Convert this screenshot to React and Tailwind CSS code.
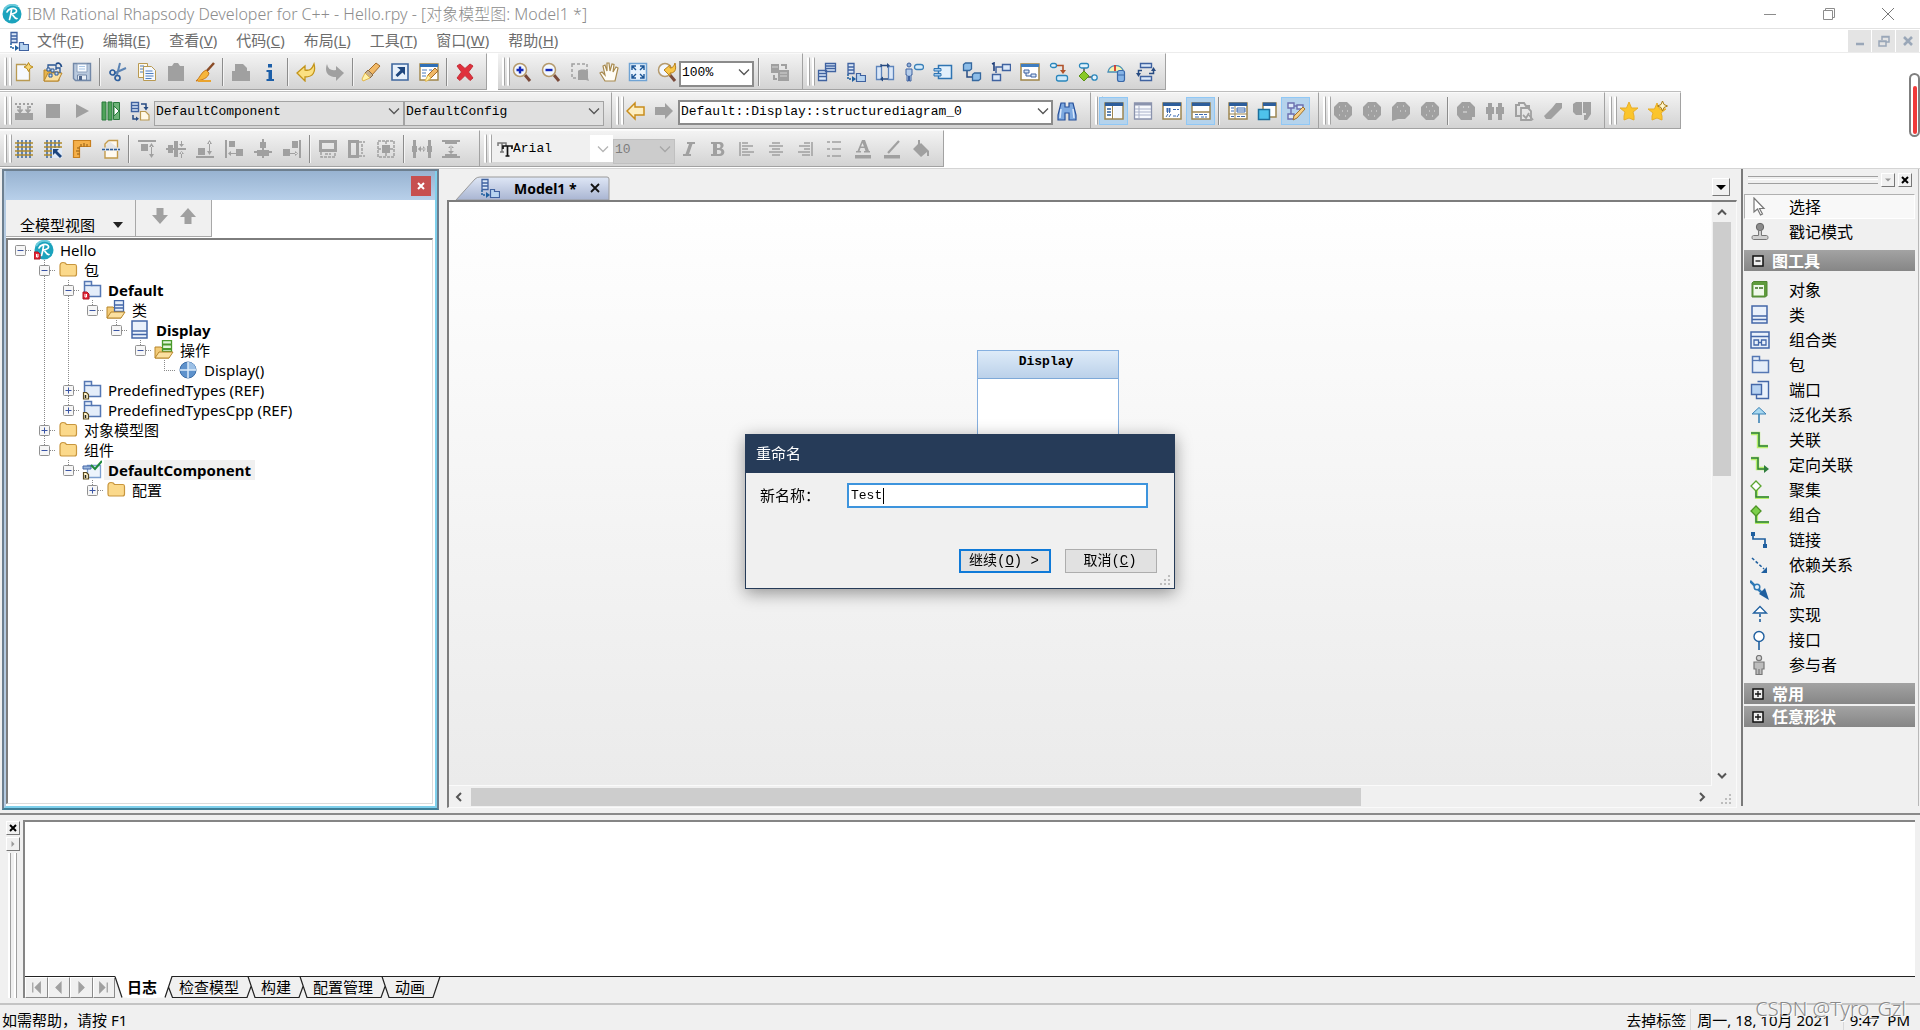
// src/App.jsx
import React, { useState } from 'react';

const UI = "font-['Noto_Sans','Noto_Sans_CJK_SC',sans-serif]";
const MONO = "font-['Liberation_Mono','Noto_Sans_CJK_SC',monospace]";

const G = '#a0a0a0';
const B = '#3f62a0';
const LB = '#dbe8f8';

/* --- ICONS (20 x 20 grid) --- */
const ICONS = {
  rhapsody: (
    <>
      <circle cx="10" cy="10" r="9.5" fill="#1ba3bd" />
      <path d="M2 6a9.500 9.500 0 0 1 14-3.500" stroke="#6ccbdc" strokeWidth="2" fill="none" />
      <path d="M7.500 15.500c1-3 1.500-6 2-9.500M5 8c1-3 7-5 9-2.500s-2 4.500-4.500 4.500c2 .5 2.500 5 5.500 4.500" stroke="#fff" strokeWidth="1.700" fill="none" strokeLinecap="round" />
    </>
  ),
  rhapsodyD: (
    <>
      <circle cx="10" cy="10" r="9.5" fill="#1ba3bd" />
      <path d="M2 6a9.500 9.500 0 0 1 14-3.500" stroke="#6ccbdc" strokeWidth="2" fill="none" />
      <path d="M7.500 15.500c1-3 1.500-6 2-9.500M5 8c1-3 7-5 9-2.500s-2 4.500-4.500 4.500c2 .5 2.500 5 5.500 4.500" stroke="#fff" strokeWidth="1.700" fill="none" strokeLinecap="round" />
      <path d="M0 12h4l2 2v5H0z" fill="#e32636" stroke="#b01522" />
      <path d="M2.500 14v3H4v-3" fill="none" stroke="#fff" />
    </>
  ),
  diagram: (
    <>
      <path d="M2 1.500h6v10h-6zM2 5h6M2 8h6" fill={LB} stroke={B} strokeWidth="1.300" />
      <path d="M2 12v5h5" fill="none" stroke="#1f5f9f" strokeWidth="1.500" strokeDasharray="2 1" />
      <path d="M6 14l4 3-4 3z" fill="#1f5f9f" />
      <path d="M10.500 11.500h4v2h5v6h-9z" fill="#b8d4f0" stroke={B} strokeWidth="1.200" />
    </>
  ),
  newFile: (
    <>
      <path d="M2.500 2.500h9l4 4v12h-13z" fill="#f6f9ff" stroke="#b99a52" strokeWidth="1.300" />
      <path d="M14.500.5l1.500 3 3 1.500-3 1.500-1.500 3-1.500-3-3-1.500 3-1.500z" fill="#f8d775" stroke="#b98a1c" />
    </>
  ),
  openModel: (
    <>
      <path d="M1 8h6l2 2h7v9h-15z" fill="#e7b44d" stroke="#b8862b" />
      <path d="M1 19l4-8h14l-4 8z" fill="#fbe0a0" stroke="#b8862b" />
      <path d="M5 7V3h4M9 3h4v5M13 6h4v5" fill="none" stroke="#2a5794" strokeWidth="1.300" />
      <path d="M4 6h3v3H4zM8 7h3v3H8zM12 10h3v3h-3zM6 12h3v3H6z" fill="#cfe2f7" stroke="#2a5794" />
      <path d="M13 2c3-2 5 0 5.500 3" fill="none" stroke="#1f4a86" strokeWidth="1.800" />
    </>
  ),
  save: (
    <>
      <path d="M1.500 1.500h17v17h-15l-2-2z" fill="#b9c9dd" stroke="#7288a8" strokeWidth="1.400" />
      <path d="M5 2h10v8H5z" fill="#f7fbff" stroke="#8ea2bd" />
      <path d="M7 4.500h6M7 7h6" stroke="#a9c6e6" />
      <path d="M5.500 13h9v5h-9z" fill="#e9eff6" stroke="#7288a8" />
      <path d="M7 14h3v4H7z" fill="#4c648a" />
    </>
  ),
  cut: (
    <>
      <path d="M12 1L9 13M18 6L7 11" stroke="#5c84b4" strokeWidth="2" />
      <circle cx="4.500" cy="10.500" r="2.500" fill="none" stroke="#2e5f9e" strokeWidth="1.700" />
      <circle cx="9.500" cy="16" r="2.500" fill="none" stroke="#2e5f9e" strokeWidth="1.700" />
    </>
  ),
  copy: (
    <>
      <path d="M1.500 1.500h9v14h-9z" fill="#fff9ea" stroke="#b99a52" />
      <path d="M6.500 4.500h8l4 4v10h-12z" fill="#f3f8ff" stroke="#b99a52" />
      <path d="M3 4h4M3 7h3M3 10h3M8.500 9h7M8.500 11.500h8M8.500 14h8M8.500 16.500h6" stroke="#4f7fc0" />
    </>
  ),
  paste: <path d="M2 4h4l2-3h4l2 3h4v15H2z" fill={G} />,
  brush: (
    <>
      <path d="M19 1l-9 10" stroke="#8a4b26" strokeWidth="2.500" />
      <path d="M11 8l3 3c-1 5-6 7-13 8 4-3 5-9 10-11z" fill="#f6b53a" stroke="#c8791a" />
      <path d="M3 19h13" stroke="#e9a32e" strokeWidth="2" />
    </>
  ),
  print: <path d="M4 2h8l4 4v3h3v10H1V9h3z" fill={G} />,
  info: <path d="M8 2h4v3.500H8zM6.500 8h5.500v9h2v2H6.500v-2h2v-7h-2z" fill="#1d5fa8" />,
  undo: <path d="M1 11L9 4v4c5 1 7-1 9-6 2 8-1 13-9 13v4z" fill="#fbe081" stroke="#c39419" strokeWidth="1.300" />,
  redo: <path d="M19 11L11 4v4C6 9 3 7 2 2c-3 8 1 13 9 13v4z" fill={G} />,
  torch: (
    <>
      <path d="M15 1l4 3-8 9-4-4z" fill="#f1b967" stroke="#a36b2a" />
      <path d="M7 8l5 5-3 3-5-5z" fill="#c9b08a" stroke="#8a6a44" />
      <path d="M4 11l5 5-7 3-1-2z" fill="#fff2a8" stroke="#e2b64a" />
    </>
  ),
  goto: (
    <>
      <path d="M2 2h16v16H2z" fill="#e7f0fa" stroke="#3f679e" strokeWidth="1.600" />
      <path d="M7 5h8v8l-2.500-2.500-5 4.500-2-2 5-5z" fill="#1f477e" />
    </>
  ),
  windowTorch: (
    <>
      <path d="M1 2h18v16H1z" fill="#fff" stroke="#a08548" strokeWidth="1.400" />
      <path d="M1 2h18v3H1z" fill="#2f6fb6" />
      <path d="M3 8h5M3 11h4M10 8h3M3 14h4" stroke="#4a7bbb" />
      <path d="M16 6l3 3-8 8-3-3z" fill="#f1b967" stroke="#a36b2a" />
      <path d="M9 13l3 3-4 3H6z" fill="#fff2a8" stroke="#e2b64a" />
    </>
  ),
  del: <path d="M2 4l3-2 5 4.500L15 2l3 2-4.500 6 4.500 6-3 2.500-5-5-5 5L2 16l4.500-6z" fill="#e0303c" stroke="#c2303a" />,
  zoomIn: (
    <>
      <path d="M13 13l5 6" stroke="#7a4a3a" strokeWidth="3" />
      <circle cx="8" cy="8" r="6.500" fill="#f3f8ff" stroke="#b59a6c" strokeWidth="1.500" />
      <path d="M4.500 8h7M8 4.500v7" stroke="#1226b8" strokeWidth="2.400" />
    </>
  ),
  zoomOut: (
    <>
      <path d="M13 13l5 6" stroke="#7a4a3a" strokeWidth="3" />
      <circle cx="8" cy="8" r="6.500" fill="#f3f8ff" stroke="#b59a6c" strokeWidth="1.500" />
      <path d="M4.500 8h7" stroke="#1226b8" strokeWidth="2.400" />
    </>
  ),
  zoomArea: (
    <>
      <path d="M2 2h15v14H2z" fill="none" stroke={G} strokeWidth="1.500" strokeDasharray="3 2" />
      <path d="M8 9c1-2 8-2 10 0v7l1 3-3-1H8z" fill={G} />
    </>
  ),
  hand: <path d="M6 19L1 11l2-1 3 3L4 4l2-1 2 6V1h2l1 8 2-7 2 .5L14 10l3-5 2 1-3 13z" fill="#fffdf6" stroke="#a88a4e" strokeWidth="1.200" />,
  fit: (
    <>
      <path d="M1.500 1.500h17v17h-17z" fill="#e8f3fd" stroke="#6fa3d4" strokeWidth="1.500" />
      <path d="M4 8V4h4M4 4l4 4M12 4h4v4M16 4l-4 4M4 12v4h4M4 16l4-4M16 12v4h-4M16 16l-4-4" fill="none" stroke="#1b5596" strokeWidth="1.400" />
    </>
  ),
  zoomUndo: (
    <>
      <path d="M13 13l5 6" stroke="#7a4a3a" strokeWidth="3" />
      <circle cx="8" cy="8" r="6.500" fill="#f3f8ff" stroke="#b59a6c" strokeWidth="1.500" />
      <path d="M7 8l6-5v3c3 0 4-2 5-5 2 8-1 10-5 10v3z" fill="#f9c74a" stroke="#b8801c" />
    </>
  ),
  sync: (
    <>
      <path d="M1 2h8v9H1zM8 8h11v11H8z" fill={G} />
      <path d="M11 3h5v4M4 13v4h3" fill="none" stroke={G} strokeWidth="2" />
      <path d="M2 5h6M10 11h7M10 14h7" stroke="#d4d4d4" />
    </>
  ),
  dObject: <path d="M8.500 1.500h10v8h-10zM8.500 4h10M8.500 6.500h10M1.500 8.500h8v10h-8zM1.500 11.500h8M1.500 14.500h8" fill={LB} stroke={B} strokeWidth="1.300" />,
  dSequence: (
    <>
      <path d="M1.500 4.500h5v13h-5zM13.500 4.500h5v13h-5z" fill={LB} stroke="#5d84bb" strokeWidth="1.300" />
      <path d="M6 2v3M6 3.500h7M13 17H7" stroke="#274b82" strokeWidth="1.300" />
      <path d="M12 1l3 2.500L12 6zM8 14.500L5 17l3 2.500z" fill="#274b82" />
    </>
  ),
  dUseCase: (
    <>
      <circle cx="5" cy="3" r="2" fill="#8fb0d8" stroke={B} />
      <path d="M2 7h6v6H7v6H5.500v-5h-1v5H3v-6H2z" fill="#b5cdea" stroke={B} />
      <rect x="10.500" y="2.500" width="9" height="5" rx="2.500" fill="#d9edfb" stroke="#3a80b8" strokeWidth="1.300" />
    </>
  ),
  dComponent: (
    <>
      <path d="M5.500 3.500h13v13h-13z" fill="#e2f0fc" stroke="#2f74b2" strokeWidth="1.500" />
      <path d="M1 6.500h7v2.500H1zM1 11.500h7V14H1z" fill="#9fcaf0" stroke="#2f74b2" />
    </>
  ),
  dDeploy: (
    <>
      <path d="M5 8v7h6" fill="none" stroke="#274b82" strokeWidth="1.500" />
      <path d="M1.500 2.500l2-1.500h6v6l-2 1.500h-6zM10.500 12.500l2-1.500h6v6l-2 1.500h-6z" fill="#8dbde8" stroke="#35689f" strokeWidth="1.300" />
    </>
  ),
  dCollab: (
    <>
      <path d="M5 11V5h7" fill="none" stroke={B} strokeWidth="1.500" />
      <path d="M11.500 2.500h8v6h-8zM1.500 12.500h8v6h-8z" fill={LB} stroke={B} strokeWidth="1.400" />
      <path d="M1 2l2-1v8" fill="none" stroke="#1f3f7a" strokeWidth="1.600" />
    </>
  ),
  dStructure: (
    <>
      <path d="M1 2h18v16H1z" fill="#fff" stroke="#a08548" strokeWidth="1.500" />
      <path d="M1 2h18v3H1z" fill="#3f7dc0" />
      <path d="M4 8h5v3H4zM11 12h5v3h-5zM6 11v3h5" fill={LB} stroke={B} />
    </>
  ),
  dState: (
    <>
      <rect x="1.500" y="1.500" width="6" height="4" rx="2" fill="#e3f3fd" stroke="#2a86bb" strokeWidth="1.300" />
      <path d="M8 3.500h6v6" fill="none" stroke="#b0522a" strokeWidth="1.600" />
      <path d="M11 8l3 4 3-4z" fill="#b0522a" />
      <rect x="7.500" y="13.500" width="11" height="5.500" rx="2" fill="#cfe9fa" stroke="#2a86bb" strokeWidth="1.300" />
    </>
  ),
  dActivity: (
    <>
      <path d="M6 6v6M10 15h5" stroke="#555" strokeWidth="1.500" />
      <rect x="1.500" y="1.500" width="9" height="4.500" rx="2" fill="#e3f3fd" stroke="#2a86bb" strokeWidth="1.300" />
      <path d="M6 9l5 5-5 5-5-5z" fill="#8ac926" stroke="#5a9312" />
      <circle cx="16.500" cy="15.500" r="2.700" fill="#e3f3fd" stroke="#2a86bb" strokeWidth="1.300" />
    </>
  ),
  dPanel: (
    <>
      <path d="M1 10a8 8 0 0 1 15-2l-5 2z" fill="#f5f3b0" stroke="#4a90b8" strokeWidth="1.300" />
      <path d="M8 3v6" stroke="#d8352c" strokeWidth="1.800" />
      <rect x="10.500" y="8.500" width="7" height="11" rx="2" fill="#86b4e6" stroke="#3a68a8" strokeWidth="1.200" />
      <path d="M11 13h6" stroke="#3a68a8" />
    </>
  ),
  dFlow: (
    <>
      <path d="M4.500 1.500h11v4h-11zM4.500 14.500h11v4h-11z" fill={LB} stroke={B} strokeWidth="1.400" />
      <path d="M6 8.500H2.500V12M13 11.500h4.500V8" fill="none" stroke="#274b82" strokeWidth="1.500" />
      <path d="M0 11h5l-2.500 4zM15 9h5l-2.500-4z" fill="#274b82" />
    </>
  ),
  make: (
    <>
      <path d="M1 12h18v7H1z" fill={G} />
      <path d="M1 3h2M5 3h2M9 3h2M13 3h2M17 3h2M3 6h2M15 6h2" stroke={G} strokeWidth="2" />
      <path d="M6 5v6M3.500 8.500L6 11.500l2.500-3M14 5v6M11.500 8.500l2.500 3 2.500-3" fill="none" stroke={G} strokeWidth="1.600" />
    </>
  ),
  stop: <path d="M3 3h14v14H3z" fill={G} />,
  play: <path d="M4 3l13 7-13 7z" fill={G} />,
  animate: (
    <>
      <path d="M1 1h4v18H1zM7 1h4v18H7z" fill="#4fa35a" stroke="#2a7a3c" />
      <path d="M12.500 1.500h6v17h-6z" fill="#6db377" stroke="#2a7a3c" />
      <path d="M13 5l5 5-5 5z" fill="#fff" stroke="#2a7a3c" />
    </>
  ),
  generate: (
    <>
      <path d="M1.500 1.500h7v9h-7zM1.500 4.500h7M1.500 7.500h7" fill={LB} stroke={B} strokeWidth="1.400" />
      <path d="M11 3h5v4M3 14v4h4" fill="none" stroke="#274b82" strokeWidth="1.500" />
      <path d="M13.500 6h5L16 9.500zM6 15.500V20l3-2.200z" fill="#274b82" />
      <path d="M10.500 10.500h5l3.500 3.500v5h-8.500z" fill="#fff9e6" stroke="#b99a52" strokeWidth="1.200" />
    </>
  ),
  back: <path d="M1 10l8-8v4h9v8H9v4z" fill="#fdeec0" stroke="#c98d1c" strokeWidth="1.500" />,
  forward: <path d="M19 10l-8-8v4H1v8h10v4z" fill={G} />,
  binoculars: (
    <>
      <path d="M4 2h4v4h4V2h4l3 12v5h-7v-7H8v7H1v-5z" fill="#7ea9e0" stroke="#27509a" strokeWidth="1.200" />
      <path d="M4 8l-1 9M16 8l1 9" stroke="#d9e8fb" strokeWidth="1.500" />
    </>
  ),
  vBrowser: (
    <>
      <path d="M1 2h18v16H1z" fill="#fff" stroke="#9c8550" strokeWidth="1.500" />
      <path d="M1 1.500h18v3.500H1z" fill="#2c5d9b" />
      <path d="M8.500 5v13" stroke="#9c8550" />
      <path d="M3 8h4M3 11h4M3 14h4" stroke="#2c5d9b" strokeWidth="1.300" />
      <path d="M10 6h8v11h-8z" fill="#f2f7fd" />
    </>
  ),
  vList: (
    <>
      <path d="M1.500 2h17v16h-17z" fill="#f7f9fd" stroke="#8a93ad" strokeWidth="1.300" />
      <path d="M1.500 2h17v2.500h-17z" fill="#8a93ad" />
      <path d="M2 8h16M2 11h16M2 14h16M6 5v12" stroke="#a9b1c9" />
    </>
  ),
  vCode: (
    <>
      <path d="M1 2h18v16H1z" fill="#fff" stroke="#9c8550" strokeWidth="1.500" />
      <path d="M1 1.500h18v3.500H1z" fill="#2c5d9b" />
      <path d="M4 8h5M4 10h5M5.500 7v5M7.500 7v5M11 8.500h3M15 8.500h2M4 16l2-3M7 16l2-3M11 15h3M15 16l2-3" stroke="#3d6bb0" />
    </>
  ),
  vOutput: (
    <>
      <path d="M1 2h18v16H1z" fill="#fff" stroke="#9c8550" strokeWidth="1.500" />
      <path d="M1 1.500h18v3.500H1z" fill="#2c5d9b" />
      <path d="M1 11h18" stroke="#9c8550" strokeWidth="1.500" />
      <path d="M4 13.500h3M8 13.500h4M13 13.500h3M4 16h4M10 16h3M14 16h2" stroke="#3d6bb0" />
    </>
  ),
  vFeatures: (
    <>
      <path d="M1 2h18v16H1z" fill="#fff" stroke="#9c8550" strokeWidth="1.500" />
      <path d="M1 1.500h18v3.500H1z" fill="#2c5d9b" />
      <path d="M7 5v13M1 13h18" stroke="#9c8550" />
      <path d="M3 7h3M3 10h3M9 7h8v4H9zM9 9h8M3 15.500h3M9 15.500h3M13 15.500h4" fill="none" stroke="#3d6bb0" />
    </>
  ),
  vOverview: (
    <>
      <path d="M6 2h13v14H6z" fill="#fff" stroke="#9c8550" strokeWidth="1.500" />
      <path d="M6 1.500h13V5H6z" fill="#2c5d9b" />
      <path d="M1.500 8.500h11v10h-11z" fill="#4ec3ec" stroke="#1d6f9c" strokeWidth="1.500" />
    </>
  ),
  vDraw: (
    <>
      <path d="M2 2h6v5H2zM11 4h6v4h-6zM2 13h6v5H2zM8 5h3M5 7v6" fill={LB} stroke="#6b6fae" strokeWidth="1.400" />
      <path d="M17 6l2 2-8 9-4 2 1-4z" fill="#f6cf86" stroke="#a07330" />
    </>
  ),
  ball: (
    <>
      <path d="M6 1h8l5 5v8l-5 5H6l-5-5V6z" fill={G} />
      <path d="M6 6h1M12 5h1M9 10h1M14 10h1M6 14h1M12 15h1" stroke="#e4e4e4" strokeWidth="1.200" />
    </>
  ),
  bubble: (
    <>
      <path d="M6 1h8l5 5v7l-5 5H7l-6 2V6z" fill={G} />
      <path d="M6 6h1M12 5h1M9 10h1M14 10h1" stroke="#e4e4e4" strokeWidth="1.200" />
    </>
  ),
  head: (
    <>
      <path d="M6 1h8l5 5v10h-3v3H5l-4-5V6z" fill={G} />
      <path d="M7 6h1M12 6h1M7 11h4" stroke="#e4e4e4" strokeWidth="1.200" />
    </>
  ),
  people: <path d="M3 2h4v4h2v7H7v6H3v-6H1V6h2zM13 2h4v4h2v7h-2v6h-4v-6h-2V6h2z" fill={G} />,
  checkDocs: (
    <>
      <path d="M2 4h3V2h5l2 3h3v10H2z" fill="none" stroke={G} strokeWidth="2" />
      <path d="M7 7h7l3 3v9H7z" fill="#e6e6e6" stroke={G} strokeWidth="1.800" />
      <path d="M9 14l3 3 3-5M15 14l4 5" fill="none" stroke={G} strokeWidth="1.800" />
    </>
  ),
  pen: <path d="M13 2h6v5L8 18H3l-2-3 8-8z" fill={G} />,
  thumbs: <path d="M1 3l3-2h6v13H4l-3-3zM11 1h8v12l-4 6h-3v-5h2v-2h-3z" fill={G} />,
  star: <path d="M10 1l2.500 6H19l-5 4 1 4v4l-5-2-5 2v-4l1-4-5-4h6.500z" fill="#fbc52c" stroke="#e8ae2a" />,
  starNew: (
    <>
      <path d="M9 2l2.500 6H18l-5 4 1 3v4l-5-2-5 2v-4l1-3-5-4h6.500z" fill="#fbc52c" stroke="#e8ae2a" />
      <path d="M14.500 0l1.500 3.500L19.500 5 16 6.500 14.500 10 13 6.500 9.500 5 13 3.500z" fill="#fff6cf" stroke="#a97b14" />
    </>
  ),
  grid: (
    <>
      <path d="M4 1v18M8 1v18M12 1v18M16 1v18" stroke="#2b5c9a" strokeWidth="1.400" />
      <path d="M1 4h18M1 8h18M1 12h18M1 16h18" stroke="#b08a2b" strokeWidth="1.400" />
    </>
  ),
  snap: (
    <>
      <path d="M4 1v18M8 1v18M12 1v18M16 1v18" stroke="#2b5c9a" strokeWidth="1.400" />
      <path d="M1 4h18M1 8h18M1 12h18M1 16h18" stroke="#b08a2b" strokeWidth="1.400" />
      <path d="M9 9h10v10H9z" fill="#dfe9f6" />
      <path d="M10 10h6l-2 2 5 5-2 2-5-5-2 2z" fill="#1c457f" />
    </>
  ),
  ruler: (
    <>
      <path d="M1.500 1.500h17v6h-11v11h-6z" fill="#f5b04a" stroke="#c77f1f" strokeWidth="1.200" />
      <path d="M9 5v2.500M12 4v3.500M15 5v2.500M5 9h2.500M4 12h3.500M5 15h2.500" stroke="#8d5a12" />
    </>
  ),
  pageBreak: (
    <>
      <path d="M7.500 1.500h9v7M4 8.500V5l3.500-3.500M4 12v7h12.500v-7" fill="#fffaf0" stroke="#c29a4a" strokeWidth="1.400" />
      <path d="M1 10.500h18" stroke="#2b5c9a" strokeWidth="1.500" strokeDasharray="3 1" />
    </>
  ),
  alTop: <path d="M1 1h18v2H1zM4 5h7v7H4zM12 8h5l-2.500-4zM14 7h1v9h-1zM12 15h5l-2.500 4z" fill={G} />,
  alMid: <path d="M0 9h20v2H0zM2 6h5v8H2zM8 2h4v16H8zM15 2h1v5h-1zM13 5h5l-2.500 3zM15 13h1v6h-1zM13 15h5l-2.500-3z" fill={G} />,
  alBottom: <path d="M1 17h18v2H1zM3 9h7v7H3zM14 3h1v10h-1zM12 5h5l-2.500-4zM12 12h5l-2.500 4z" fill={G} />,
  alLeft: <path d="M1 1h2v18H1zM5 2h6v6H5zM5 14h7v1H5zM7 12v5l-3-2.500zM12 10h7v7h-7z" fill={G} />,
  alCenter: <path d="M9 0h2v19H9zM7 3h6v6H7zM1 12h18v2H1zM4 11h12v6H4z" fill={G} />,
  alRight: <path d="M17 1h2v18h-2zM10 2h6v7h-6zM8 14h7v1H8zM13 12v5l3-2.500zM1 10h7v7H1z" fill={G} />,
  szWidth: (
    <>
      <path d="M2.500 2.500h15v9h-15z" fill="none" stroke={G} strokeWidth="3" />
      <path d="M3 13v5h14v-5M7 15h6" fill="none" stroke={G} strokeWidth="1.500" strokeDasharray="3 1" />
    </>
  ),
  szHeight: (
    <>
      <path d="M2.500 2.500h8v15h-8z" fill="none" stroke={G} strokeWidth="3" />
      <path d="M12 3h6M12 17h6M15 5v10" fill="none" stroke={G} strokeWidth="1.500" strokeDasharray="3 1" />
    </>
  ),
  szBoth: (
    <>
      <path d="M6 6h8v8H6z" fill={G} />
      <path d="M2 2h16v16H2zM10 2v4M10 14v4M2 10h4M14 10h4" fill="none" stroke={G} strokeWidth="1.500" strokeDasharray="3 1" />
    </>
  ),
  spH: <path d="M1 1h3v18H1zM16 1h3v18h-3zM0 7h5v6H0zM15 7h5v6h-5zM6 9.500h8v1H6zM9 7v6l-3-3zM11 7v6l3-3z" fill={G} />,
  spV: <path d="M1 1h18v2h-3v2H4V3H1zM1 19h18v-2h-3v-2H4v2H1zM9.500 6h1v9h-1zM7 9h6l-3-3zM7 12h6l-3 3z" fill={G} />,
  italic: <path d="M8 3h8v2h-2.500L10 15h2v2H4v-2h2.500L10 5H8z" fill={G} />,
  bold: <path fillRule="evenodd" d="M3 3h9c4 0 5 5 1.500 6.500C18 11 17 17 12 17H3v-2h2V5H3zM9 5v4h2c2 0 2-4 0-4zM9 11v4h2c3 0 3-4 0-4z" fill={G} />,
  txLeft: <path d="M3 3v14M5 4h6M5 7h11M5 10h6M5 13h12M5 16h8" stroke={G} strokeWidth="1.500" />,
  txCenter: <path d="M6 4h8M3 7h14M6 10h8M3 13h14M6 16h8" stroke={G} strokeWidth="1.500" />,
  txRight: <path d="M17 3v14M9 4h6M4 7h11M9 10h6M3 13h12M7 16h8" stroke={G} strokeWidth="1.500" />,
  bullets: <path d="M3 3h3M3 10h3M3 17h3M8 3h9M8 10h9M8 17h9" stroke={G} strokeWidth="1.500" />,
  fontColor: <path fillRule="evenodd" d="M2 16h16v3.500H2zM9 1h3l4 11h1v1.500h-6V12h1.500l-1-3H7.500l-1 3H8v1.500H3V12h1.500zM8 7.500h3L9.500 4z" fill={G} />,
  lineColor: (
    <>
      <path d="M2 16h16v3.500H2z" fill={G} />
      <path d="M6 14L17 2" stroke={G} strokeWidth="2.200" />
    </>
  ),
  fill: <path d="M7 1h2v4l1-1 8 8v5h-2v-4l-6 5-8-8 5-5z" fill={G} />,
  folder: <path d="M2 6c0-3 1-3.500 3-3.500s3 .5 3.500 2H17c1.500 0 1.500.5 1.500 2V14c0 1.500-.5 2-2 2h-13c-1 0-1.500-.5-1.500-2z" fill="#fbd98b" stroke="#c8963e" strokeWidth="1.200" />,
  package: (
    <>
      <path d="M2.500 5.500v-4h7v4h9v12h-16z" fill="#e4edf9" stroke="#5577b3" strokeWidth="1.500" />
      <path d="M2.500 5.500h8" stroke="#5577b3" strokeWidth="1.300" />
    </>
  ),
  packageD: (
    <>
      <path d="M2.500 5.500v-4h7v4h9v11h-16z" fill="#e4edf9" stroke="#5577b3" strokeWidth="1.500" />
      <path d="M2.500 5.500h8" stroke="#5577b3" strokeWidth="1.300" />
      <path d="M1 12h4l2 2v5H1z" fill="#e32636" stroke="#b01522" />
      <path d="M3 14v3h1.500v-3" fill="none" stroke="#fff" />
    </>
  ),
  packageRef: (
    <>
      <path d="M2.500 5.500v-4h7v4h9v11h-16z" fill="#e4edf9" stroke="#5577b3" strokeWidth="1.500" />
      <path d="M2.500 5.500h8" stroke="#5577b3" strokeWidth="1.300" />
      <path d="M1.500 12.500h3l2 2v4.500h-5z" fill="#fff4cc" stroke="#5a4a20" strokeWidth="1.200" />
      <path d="M3.500 15v3" stroke="#222" strokeWidth="1.500" />
    </>
  ),
  classFolder: (
    <>
      <path d="M1 7h6l2 2h6v9H1z" fill="#f3cb78" stroke="#b8862b" />
      <path d="M8.500.5h9v11h-9zM8.500 5h9M8.500 8h9" fill="#e6effb" stroke="#4467a8" strokeWidth="1.300" />
      <path d="M1 18l4-6h14l-4 6z" fill="#fbe0a0" stroke="#b8862b" />
    </>
  ),
  opFolder: (
    <>
      <path d="M1 7h6l2 2h6v9H1z" fill="#f3cb78" stroke="#b8862b" />
      <path d="M8.500.5h9v11h-9z" fill="#e3f6dc" stroke="#4a9a2c" strokeWidth="1.300" />
      <path d="M8.500 4.500h9M8 9h10" stroke="#4a9a2c" strokeWidth="2" />
      <path d="M1 18l4-6h14l-4 6z" fill="#fbe0a0" stroke="#b8862b" />
    </>
  ),
  class: (
    <>
      <path d="M2 1h15v17H2z" fill="#eaf1fb" stroke="#4467a8" strokeWidth="1.500" />
      <path d="M2 11h15M2 14.500h15" stroke="#4467a8" strokeWidth="1.300" />
    </>
  ),
  operation: (
    <>
      <circle cx="10" cy="10" r="8" fill="#5e92cc" stroke="#3d6ea8" />
      <path d="M10 2a8 8 0 0 1 8 8h-8z" fill="#9cc0e6" />
      <path d="M10 2v16M2 10h16" stroke="#dcebfa" strokeWidth="1.500" />
    </>
  ),
  component: (
    <>
      <path d="M5.500 5.500h13v12h-13z" fill="#edf4fc" stroke="#7da0cf" strokeWidth="1.300" />
      <path d="M1 6h8v3H1z" fill="#9db9de" stroke="#4467a8" />
      <path d="M9 5l4 4 7-8" fill="none" stroke="#1f8a3c" strokeWidth="2" />
      <path d="M1.500 12.500h3l2 2v4.500h-5z" fill="#fff4cc" stroke="#5a4a20" strokeWidth="1.200" />
      <path d="M3.500 15v3" stroke="#222" strokeWidth="1.500" />
    </>
  ),
  pSelect: <path d="M4 1v14l3.500-3 3 6 2-1-3-5.500H14z" fill="#fff" stroke="#777" strokeWidth="1.200" />,
  pStamp: (
    <>
      <circle cx="10" cy="5" r="3.700" fill="#8b8b8b" stroke="#666" />
      <path d="M8.500 8.500h3v5h5c2 0 2 4 0 4h-13c-2 0-2-4 0-4h5z" fill="#d0d0d0" stroke="#777" />
    </>
  ),
  pObject: (
    <>
      <path d="M2 3l1.500-1.500H17v14L15.500 17H2z" fill="#5f9b3c" stroke="#4f8530" />
      <path d="M3.500 5H14v10.500H3.500z" fill="#f0f8ea" />
      <path d="M5 8h3M9 8h4" stroke="#3b6d22" strokeWidth="1.300" />
    </>
  ),
  pComposite: (
    <>
      <path d="M1 2h18v16H1z" fill="#eaf1fb" stroke="#4467a8" strokeWidth="1.500" />
      <path d="M1 6.500h18M4 10h4.500v5H4zM11.500 10H16v5h-4.500zM8.500 12.500h3" fill="none" stroke="#4467a8" strokeWidth="1.300" />
    </>
  ),
  pPort: (
    <>
      <path d="M7.500 1.500h11v17h-12v-4" fill="#eaf1fb" stroke="#4467a8" strokeWidth="1.400" />
      <path d="M1.500 4.500h10v10h-10z" fill="#b7d2f2" stroke="#4467a8" strokeWidth="1.400" />
    </>
  ),
  pGeneral: (
    <>
      <path d="M9 8v10" stroke="#3b82b5" strokeWidth="1.600" />
      <path d="M9 2.500l7 6.500H2z" fill="#a8d8f0" stroke="#3b82b5" />
    </>
  ),
  pAssoc: (
    <>
      <path d="M1 3.500h7.500v13H18" stroke="#b6f06a" strokeWidth="3.400" fill="none" />
      <path d="M1 3h8v13h9" stroke="#2f7d3d" strokeWidth="1.500" fill="none" />
    </>
  ),
  pDirAssoc: (
    <>
      <path d="M1 3.500h6.500v10H16" stroke="#b6f06a" strokeWidth="3.400" fill="none" />
      <path d="M1 3h7v11h8" stroke="#2f7d3d" strokeWidth="1.500" fill="none" />
      <path d="M14 10l5 4-5 4z" fill="#2f7d3d" />
    </>
  ),
  pAggr: (
    <>
      <path d="M6.500 9v8.500H19" stroke="#b6f06a" strokeWidth="3.200" fill="none" />
      <path d="M6 9v8h13" stroke="#2f7d3d" strokeWidth="1.500" fill="none" />
      <path d="M6 1l5 5-5 5-5-5z" fill="#fff" stroke="#5aa52e" strokeWidth="1.300" />
    </>
  ),
  pCompo: (
    <>
      <path d="M6.500 9v8.500H19" stroke="#b6f06a" strokeWidth="3.200" fill="none" />
      <path d="M6 9v8h13" stroke="#2f7d3d" strokeWidth="1.500" fill="none" />
      <path d="M6 1l5 5-5 5-5-5z" fill="#7cd04a" stroke="#4e9426" strokeWidth="1.300" />
    </>
  ),
  pLink: (
    <>
      <path d="M3 4v5h12v7" stroke="#1f5f9f" strokeWidth="1.700" fill="none" />
      <path d="M1 2h4v4H1zM13 14h4v4h-4z" fill="#1f5f9f" />
    </>
  ),
  pDepend: (
    <>
      <path d="M2 3l12 11" stroke="#1f5f9f" strokeWidth="1.600" strokeDasharray="3 2" />
      <path d="M17 12v6h-6z" fill="#1f5f9f" />
    </>
  ),
  pFlow: (
    <>
      <path d="M0 1l13 13" stroke="#2d78b5" strokeWidth="2.500" />
      <circle cx="7" cy="7" r="2.800" fill="#e4f2fc" stroke="#2d78b5" strokeWidth="1.500" />
      <path d="M9 14l6-6 4 12z" fill="#1f5f9f" />
    </>
  ),
  pReal: (
    <>
      <path d="M10 9v10" stroke="#1f5f9f" strokeWidth="1.600" strokeDasharray="3 2" />
      <path d="M10 1.500L16.500 8h-13z" fill="#fff" stroke="#1f5f9f" strokeWidth="1.300" />
    </>
  ),
  pInterface: (
    <>
      <path d="M9 11v9" stroke="#1f5f9f" strokeWidth="1.600" />
      <circle cx="9" cy="6.500" r="5" fill="#fff" stroke="#1f5f9f" strokeWidth="1.400" />
    </>
  ),
  pActor: (
    <>
      <circle cx="9" cy="3" r="2.600" fill="#d4d4d4" stroke="#777" strokeWidth="1.200" />
      <path d="M4 7h10v7h-2v5.500H6V14H4zM9 14v5" fill="#bdbdbd" stroke="#777" strokeWidth="1.200" />
    </>
  ),
};

const Icon = ({ name, className = 'w-5 h-5' }) => (
  <svg viewBox="0 0 20 20" className={`shrink-0 ${className}`} aria-hidden="true">
    {ICONS[name]}
  </svg>
);

/* --- TOOLBAR PARTS --- */
const Gripper = () => (
  <div className="flex gap-[2px] self-stretch py-[3px]">
    <div className="w-[3px] rounded-sm border-r border-[#a4a4a4] bg-white" />
    <div className="w-[3px] rounded-sm border-r border-[#a4a4a4] bg-white" />
  </div>
);

const Sep = () => <div className="w-[2px] h-7 shrink-0 border-l border-[#8c8c8c] bg-[#f4f4f4]" />;

const Tools = ({ items, gap = 'gap-[5px]' }) => (
  <div className={`flex items-center ${gap}`}>
    {items.map((item, i) =>
      item === '|' ? (
        <Sep key={i} />
      ) : (
        <button key={i} aria-label={item} className="flex items-center justify-center w-6 h-6 shrink-0">
          <Icon name={item} />
        </button>
      )
    )}
  </div>
);

const ToggleTools = ({ items, active }) => (
  <div className="flex items-center -ml-1">
    {items.map((item, i) =>
      item === '|' ? (
        <div key={i} className="px-[3px]">
          <Sep />
        </div>
      ) : (
        <button
          key={i}
          aria-label={item}
          aria-pressed={active.includes(item)}
          className={`flex items-center justify-center w-[29px] h-7 shrink-0 border ${
            active.includes(item) ? 'border-[#90c8f6] bg-[#b5d3ec]' : 'border-transparent'
          }`}
        >
          <Icon name={item} />
        </button>
      )
    )}
  </div>
);

const Band = ({ className, children }) => (
  <div className={`flex items-center h-[37px] shrink-0 pl-1 border-t border-b border-r border-t-[#fafafa] border-b-[#a2a2a2] border-r-[#a2a2a2] bg-linear-to-b from-[#f3f3f3] to-[#d3d3d3] ${className}`}>
    <Gripper />
    {children}
  </div>
);

const Chevron = ({ color = '#555' }) => (
  <svg viewBox="0 0 12 12" className="absolute right-1 top-1/2 w-3 h-3 -translate-y-1/2 pointer-events-none">
    <path d="M1 3.500l5 5 5-5" fill="none" stroke={color} strokeWidth="1.300" />
  </svg>
);

const Combo = ({ label, value, className, box, chevron }) => (
  <div className={`relative shrink-0 ${className}`}>
    <select aria-label={label} defaultValue={value} className={`appearance-none w-full h-full pl-[1px] pb-1 text-[13px] outline-none ${MONO} ${box}`}>
      <option>{value}</option>
    </select>
    <Chevron color={chevron} />
  </div>
);

/* --- MODEL TREE --- */
// guides: columns left of the row that still have a running line
const TREE = [
  { depth: 0, icon: 'rhapsodyD', text: 'Hello', open: true },
  { depth: 1, icon: 'folder', text: '包', open: true, more: true },
  { depth: 2, icon: 'packageD', text: 'Default', open: true, more: true, bold: true, guides: [1] },
  { depth: 3, icon: 'classFolder', text: '类', open: true, guides: [1, 2] },
  { depth: 4, icon: 'class', text: 'Display', open: true, bold: true, guides: [1, 2] },
  { depth: 5, icon: 'opFolder', text: '操作', open: true, guides: [1, 2] },
  { depth: 6, icon: 'operation', text: 'Display()', leaf: true, guides: [1, 2] },
  { depth: 2, icon: 'packageRef', text: 'PredefinedTypes (REF)', more: true, guides: [1] },
  { depth: 2, icon: 'packageRef', text: 'PredefinedTypesCpp (REF)', guides: [1] },
  { depth: 1, icon: 'folder', text: '对象模型图', more: true },
  { depth: 1, icon: 'folder', text: '组件', open: true },
  { depth: 2, icon: 'component', text: 'DefaultComponent', open: true, bold: true, selected: true },
  { depth: 3, icon: 'folder', text: '配置' },
];

const Branch = ({ node }) => (
  <svg viewBox="0 0 24 20" className="w-6 h-5 shrink-0">
    <g stroke="#8a8a8a" strokeDasharray="1 1" fill="none">
      {node.depth > 0 && <path d="M12.500 0v10" />}
      {node.more && <path d="M12.500 10v10" />}
      <path d="M12 10.500h12" />
    </g>
    {!node.leaf && (
      <>
        <rect x="7.500" y="5.500" width="10" height="10" rx="1" fill="#f6f6f6" stroke="#919191" />
        <path d={node.open ? 'M9.500 10.500h6' : 'M9.500 10.500h6M12.500 7.500v6'} stroke="#3b55a5" />
      </>
    )}
  </svg>
);

const TreeRow = ({ node }) => (
  <li className="flex items-center h-5">
    {Array.from({ length: node.depth }).map((_, i) => (
      <svg key={i} viewBox="0 0 24 20" className="w-6 h-5 shrink-0">
        {(node.guides || []).includes(i) && <path d="M12.500 0v20" stroke="#8a8a8a" strokeDasharray="1 1" />}
      </svg>
    ))}
    <Branch node={node} />
    <div className="flex justify-center w-6 shrink-0">
      <Icon name={node.icon} />
    </div>
    <span className={`px-1 leading-5 whitespace-nowrap ${node.bold ? 'font-bold' : ''} ${node.selected ? 'bg-[#f0f0f0]' : ''}`}>
      {node.text}
    </span>
  </li>
);

const ModelBrowser = () => (
  <aside className="flex flex-col w-[437px] ml-[2px] shrink-0 border-2 border-[#6d7f8f] border-b-[#3f7f98] bg-white">
    <div className="flex flex-col flex-1 border-2 border-t-0 border-[#7fd0ec] border-l-[#b5cbe2]">
      <div className="flex items-center justify-end h-[29px] pr-1 bg-linear-to-b from-[#98b3d1] to-[#b8d0ea]">
        <button aria-label="关闭" className="flex items-center justify-center w-5 h-5 bg-[#c75050]">
          <svg viewBox="0 0 8 8" className="w-2 h-2"><path d="M1 1l6 6M7 1L1 7" stroke="#fff" strokeWidth="2" /></svg>
        </button>
      </div>
      <div className="flex h-[37px]">
        <button className="flex items-end justify-between w-[130px] pl-[14px] pr-3 border-r border-b border-[#a8a8a8] bg-[#f0f0f0]">
          <span>全模型视图</span>
          <svg viewBox="0 0 10 6" className="w-[10px] h-[6px] mb-2"><path d="M0 0h10L5 6z" fill="#222" /></svg>
        </button>
        <div className="flex items-center justify-center gap-2 w-[76px] pb-1 border-r border-b border-[#a8a8a8] bg-[#f0f0f0]">
          <button aria-label="下移"><svg viewBox="0 0 20 20" className="w-5 h-5"><path d="M6.500 2h7v7H18l-8 9-8-9h4.500z" fill={G} /></svg></button>
          <button aria-label="上移"><svg viewBox="0 0 20 20" className="w-5 h-5"><path d="M6.500 18h7v-7H18l-8-9-8 9h4.500z" fill={G} /></svg></button>
        </div>
      </div>
      <ul className="flex-1 mt-[1px] mr-[2px] mb-[2px] border-t-2 border-l-2 border-r border-b border-t-[#7d7d7d] border-l-[#7d7d7d] border-[#dcdcdc]">
        {TREE.map((node, i) => (
          <TreeRow key={i} node={node} />
        ))}
      </ul>
    </div>
  </aside>
);

/* --- DIAGRAM AREA --- */
const Arrow = ({ d, className = '' }) => (
  <svg viewBox="0 0 12 12" className={`w-3 h-3 shrink-0 ${className}`}>
    <path d={d} fill="none" stroke="#555" strokeWidth="2" />
  </svg>
);

const SizeGrip = () => (
  <svg viewBox="0 0 12 12" className="w-3 h-3">
    <path d="M9 1h2v2H9zM5 5h2v2H5zM9 5h2v2H9zM1 9h2v2H1zM5 9h2v2H5zM9 9h2v2H9z" fill="#bdbdbd" />
  </svg>
);

const DiagramArea = () => (
  <section className="flex flex-col flex-1 min-w-0 ml-2 mr-1 pb-[2px]">
    <div className="flex items-end justify-between h-[31px] pl-2 pr-[7px]">
      <div className="relative flex items-center h-6 w-[155px] pl-[25px]">
        <svg viewBox="0 0 155 24" preserveAspectRatio="none" className="absolute inset-0 w-full h-full">
          <defs>
            <linearGradient id="tab" x1="0" y1="0" x2="0" y2="1">
              <stop offset="0" stopColor="#dfe7f6" />
              <stop offset="1" stopColor="#a9b5d2" />
            </linearGradient>
          </defs>
          <path d="M1 24L20 3q2-2 5-2h127q2 0 2 2v21z" fill="url(#tab)" stroke="#9a9a9a" />
        </svg>
        <Icon name="diagram" className="relative w-5 h-5" />
        <span className="relative ml-[14px] text-[14px] font-bold">Model1 *</span>
        <button aria-label="关闭图" className="relative ml-auto mr-[10px]">
          <svg viewBox="0 0 10 10" className="w-[10px] h-[10px]"><path d="M1 1l8 8M9 1L1 9" stroke="#111" strokeWidth="1.800" /></svg>
        </button>
      </div>
      <button aria-label="图列表" className="flex items-center justify-center w-[18px] h-[18px] mb-1 border border-white border-r-[#777] border-b-[#777] bg-[#f0f0f0]">
        <svg viewBox="0 0 10 5" className="w-[10px] h-[5px]"><path d="M0 0h10L5 5z" fill="#000" /></svg>
      </button>
    </div>

    <div className="flex flex-col flex-1 border-t-2 border-l-2 border-r border-b border-t-[#7d7d7d] border-l-[#7d7d7d] border-[#fafafa]">
      <div className="flex flex-1">
        <div className="relative flex-1 overflow-hidden border-r border-b border-[#fafafa] bg-linear-to-b from-white to-[#ebebeb]">
          <div className="absolute left-[528px] top-[148px] w-[142px] h-40 border border-[#86b0e0] bg-white">
            <div className={`h-7 pt-[3px] pr-1 text-center text-[13px] leading-4 font-bold border-b border-[#7ea9d8] bg-linear-to-b from-[#deebf8] to-[#bbd1ea] ${MONO}`}>
              Display
            </div>
          </div>
        </div>
        <div className="flex flex-col items-center w-6 pr-[5px]">
          <Arrow d="M2 8.500l4-4 4 4" className="my-1" />
          <div className="w-[18px] h-[254px] bg-[#cdcdcd]" />
          <Arrow d="M2 3.500l4 4 4-4" className="mt-auto mb-1" />
        </div>
      </div>
      <div className="flex items-center h-[21px] pl-1">
        <Arrow d="M8 2l-4 4 4 4" />
        <div className="flex-1 mx-[6px]">
          <div className="w-[73%] h-[18px] bg-[#cdcdcd]" />
        </div>
        <Arrow d="M4 2l4 4-4 4" />
        <div className="flex items-end justify-end w-6 h-full mr-1 pb-[2px]">
          <SizeGrip />
        </div>
      </div>
    </div>
  </section>
);

/* --- DRAWING PALETTE --- */
const PALETTE = [
  ['pObject', '对象'], ['class', '类'], ['pComposite', '组合类'], ['package', '包'],
  ['pPort', '端口'], ['pGeneral', '泛化关系'], ['pAssoc', '关联'], ['pDirAssoc', '定向关联'],
  ['pAggr', '聚集'], ['pCompo', '组合'], ['pLink', '链接'], ['pDepend', '依赖关系'],
  ['pFlow', '流'], ['pReal', '实现'], ['pInterface', '接口'], ['pActor', '参与者'],
];

const PaletteItem = ({ icon, text, className = 'border-transparent' }) => (
  <button className={`flex items-center w-full h-[25px] pl-[5px] gap-[19px] text-[16px] border ${className}`}>
    <Icon name={icon} />
    <span>{text}</span>
  </button>
);

const PaletteHeader = ({ text, open }) => (
  <button className="flex items-center w-full h-[21px] pl-2 gap-2 text-[16px] font-bold text-white bg-linear-to-b from-[#a3a3a3] to-[#868686]">
    <svg viewBox="0 0 12 12" className="w-3 h-3 shrink-0">
      <path d="M1 1h10v10H1z" fill="#eee" stroke="#111" strokeWidth="1.500" />
      <path d={open ? 'M3.500 6h5' : 'M3 6h6M6 3v6'} stroke="#111" strokeWidth="1.300" />
    </svg>
    <span className="leading-5">{text}</span>
  </button>
);

const Palette = () => (
  <aside className="w-[178px] mr-px mb-1 shrink-0 pl-px pr-[3px] border-l-2 border-r border-l-[#7a7a7a] border-r-[#b8b8b8] bg-[#f0f0f0]">
    <div className="flex items-center gap-[3px] h-[25px] pl-1 pr-[3px] pb-1">
      <div className="flex-1 h-2 border-t border-b border-[#a0a0a0]">
        <div className="h-[3px] border-b border-white" />
      </div>
      <button aria-label="菜单" className="flex items-center justify-center w-[14px] h-[14px] border border-white border-r-[#777] border-b-[#777]">
        <svg viewBox="0 0 8 4" className="w-[6px] h-1"><path d="M0 0h8L4 4z" fill="#999" /></svg>
      </button>
      <button aria-label="关闭工具" className="flex items-center justify-center w-[14px] h-[14px] border border-white border-r-[#777] border-b-[#777]">
        <svg viewBox="0 0 8 8" className="w-2 h-2"><path d="M1 1l6 6M7 1L1 7" stroke="#000" strokeWidth="2" /></svg>
      </button>
    </div>
    <PaletteItem icon="pSelect" text="选择" className="border-white border-t-[#b0b0b0] border-l-[#b0b0b0] bg-[#f8f8f8]" />
    <PaletteItem icon="pStamp" text="戳记模式" />
    <div className="pt-[6px] pb-[6px]">
      <PaletteHeader text="图工具" open />
    </div>
    {PALETTE.map(([icon, text]) => (
      <PaletteItem key={text} icon={icon} text={text} />
    ))}
    <div className="flex flex-col gap-[2px] pt-[6px]">
      <PaletteHeader text="常用" />
      <PaletteHeader text="任意形状" />
    </div>
  </aside>
);

/* --- OUTPUT WINDOW --- */
const NAV = ['M3 2v8M9 2v8L5 6z', 'M8 2v8L4 6z', 'M4 2v8l4-4z', 'M3 2v8l4-4zM9 2v8'];
const OUTPUT_TABS = ['日志', '检查模型', '构建', '配置管理', '动画'];

// edge between tab i and the next one, depending on which is in front
const TabEdge = ({ left, right }) => (
  <svg viewBox="0 0 22 22" className="w-[22px] h-[22px] shrink-0">
    {left && <path d="M0 0h15L8 21.500H0z" fill="#fff" />}
    {right && <path d="M22 0H8l7 21.500h7z" fill="#fff" />}
    <g fill="none" stroke="#222" strokeWidth="1.200">
      {left ? (
        <path d="M8 21.500L15 .5h7M11.500 11l4 10.500H22" />
      ) : (
        <path d={right ? 'M0 .5h8l7 21M0 21.500h8l3.500-10.500' : 'M0 .5h22M9 .5l7 21h6M0 21.500h8l4-11'} />
      )}
    </g>
  </svg>
);

const OutputPanel = () => {
  const [tab, setTab] = useState(0);

  return (
    <section className="flex h-[190px] shrink-0 pt-[5px] pb-[5px] pr-[5px] border-t-2 border-[#8a8a8a] bg-[#f0f0f0]">
      <div className="flex flex-col items-center w-[23px] pl-[2px] pt-px gap-[2px]">
        <button aria-label="关闭输出" className="flex items-center justify-center w-[14px] h-[14px] border border-white border-r-[#777] border-b-[#777]">
          <svg viewBox="0 0 8 8" className="w-2 h-2"><path d="M1 1l6 6M7 1L1 7" stroke="#000" strokeWidth="2" /></svg>
        </button>
        <button aria-label="展开输出" className="flex items-center justify-center w-[14px] h-[14px] border border-white border-r-[#777] border-b-[#777]">
          <svg viewBox="0 0 4 8" className="w-1 h-[6px]"><path d="M0 0v8l4-4z" fill="#999" /></svg>
        </button>
        <div className="flex flex-1 gap-[3px]">
          <div className="w-[3px] border-r border-[#a0a0a0] bg-white" />
          <div className="w-[3px] border-r border-[#a0a0a0] bg-white" />
        </div>
      </div>
      <div className="flex flex-col flex-1 border-t-2 border-l-2 border-t-[#858585] border-l-[#858585]">
        <div className="flex-1 bg-white" />
        <div className="flex h-[22px] shrink-0">
          <div className="flex w-[90px] shrink-0 border-t border-[#222]">
            {NAV.map((d) => (
              <button key={d} aria-label="滚动标签" className="flex items-center justify-center flex-1 border border-white border-r-[#8a8a8a] border-b-[#8a8a8a]">
                <svg viewBox="0 0 12 12" className="w-[15px] h-[15px]"><path d={d} fill="#a0a0a0" stroke="#a0a0a0" /></svg>
              </button>
            ))}
          </div>
          <svg viewBox="0 0 12 22" className="w-3 h-[22px] shrink-0">
            {tab === 0 && <path d="M0 0l7 21.500h5V0z" fill="#fff" />}
            <path d={tab === 0 ? 'M0 .5l7 21' : 'M0 .5h12M0 .5l7 21h5'} fill="none" stroke="#222" strokeWidth="1.200" />
          </svg>
          {OUTPUT_TABS.map((text, i) => (
            <React.Fragment key={text}>
              <button
                onClick={() => setTab(i)}
                className={`shrink-0 leading-5 whitespace-nowrap border-t border-b ${tab === i ? 'font-bold border-white bg-white' : 'border-[#222]'}`}
              >
                {text}
              </button>
              {i < OUTPUT_TABS.length - 1 && <TabEdge left={tab === i} right={tab === i + 1} />}
            </React.Fragment>
          ))}
          <svg viewBox="0 0 16 22" className="w-4 h-[22px] shrink-0">
            <path d="M0 21.500h8l7-21M0 .5h16" fill="none" stroke="#222" strokeWidth="1.200" />
          </svg>
          <div className="flex-1 border-t border-[#222]" />
        </div>
      </div>
    </section>
  );
};

/* --- RENAME DIALOG --- */
const RenameDialog = () => (
  <div role="dialog" aria-label="重命名" className="fixed left-1/2 top-[434px] z-30 w-[430px] h-[155px] -translate-x-1/2 flex flex-col border border-[#263b58] bg-[#f0f0f0] shadow-[0_4px_16px_rgba(0,0,0,0.4)]">
    <div className="flex items-center h-[38px] shrink-0 pl-[10px] pb-px text-white bg-[#263b58]">重命名</div>
    <div className="flex items-center pt-[10px] pl-[14px] pr-[26px]">
      <label htmlFor="new-name" className="w-[87px]">新名称：</label>
      <div className="relative flex-1">
        <input id="new-name" defaultValue="Test" className={`block w-full h-[25px] pl-[2px] text-[13px] border-2 border-[#3d94dd] bg-white outline-none ${MONO}`} />
        <span className="absolute left-[36px] top-[5px] w-px h-4 bg-black" />
      </div>
    </div>
    <div className="flex justify-end gap-[14px] mt-auto mb-[15px] pr-[17px]">
      <button className={`w-[92px] h-6 pr-[2px] text-[14px] leading-5 border-2 border-[#0f7ad8] bg-[#e1e1e1] ${MONO}`}>
        继续(<u>O</u>) &gt;
      </button>
      <button className={`w-[92px] h-6 pr-[2px] text-[14px] leading-5 border border-[#adadad] bg-[#e1e1e1] ${MONO}`}>
        取消(<u>C</u>)
      </button>
    </div>
    <div className="absolute right-[3px] bottom-[2px]">
      <SizeGrip />
    </div>
  </div>
);

const MENUS = [
  ['文件', 'F'], ['编辑', 'E'], ['查看', 'V'], ['代码', 'C'],
  ['布局', 'L'], ['工具', 'T'], ['窗口', 'W'], ['帮助', 'H'],
];

const App = () => {
  return (
    <div className={`flex flex-col w-full h-screen overflow-hidden bg-[#f0f0f0] text-[15px] text-black ${UI}`}>

      {/* --- TITLE BAR --- */}
      <header className="flex items-center justify-between h-[29px] shrink-0 pl-[2px] pr-[26px] border-b border-[#e2e2e2] bg-white text-[#8c8c8c]">
        <div className="flex items-center gap-[5px]">
          <Icon name="rhapsody" />
          <span className="text-[16px] font-light">IBM Rational Rhapsody Developer for C++ - Hello.rpy - [对象模型图: Model1 *]</span>
        </div>
        <div className="flex items-center gap-[47px]">
          <button aria-label="最小化"><svg viewBox="0 0 12 12" className="w-3 h-3"><path d="M0 6.500h12" stroke="#8c8c8c" /></svg></button>
          <button aria-label="还原"><svg viewBox="0 0 12 12" className="w-3 h-3"><path d="M.5 2.500h9v9h-9zM2.500 2.500v-2h9v9h-2" fill="none" stroke="#8c8c8c" /></svg></button>
          <button aria-label="关闭窗口"><svg viewBox="0 0 12 12" className="w-3 h-3"><path d="M0 0l12 12M12 0L0 12" stroke="#777" /></svg></button>
        </div>
      </header>

      {/* --- MENU BAR --- */}
      <nav className="flex items-center justify-between h-6 shrink-0 pl-[9px] pr-px border-b border-[#ececec] bg-white text-[#6d6d6d]">
        <div className="flex items-center">
          <Icon name="diagram" />
          <div className="flex gap-[19px] ml-2">
            {MENUS.map(([text, key]) => (
              <button key={key}>
                {text}(<u>{key}</u>)
              </button>
            ))}
          </div>
        </div>
        <div className="flex gap-px">
          <button aria-label="最小化图" className="flex items-center justify-center w-[23px] h-[22px] bg-[#e4e4e4]">
            <svg viewBox="0 0 12 12" className="w-3 h-3"><path d="M2 9h8" stroke="#9aa7b8" strokeWidth="2.500" /></svg>
          </button>
          <button aria-label="还原图" className="flex items-center justify-center w-[23px] h-[22px] bg-[#e4e4e4]">
            <svg viewBox="0 0 12 12" className="w-3 h-3"><path d="M1 6h7v5H1zM1 6.500h7M4 5V1.500h7V7H8.500M4 2h7" fill="none" stroke="#9aa7b8" strokeWidth="1.500" /></svg>
          </button>
          <button aria-label="关闭图窗口" className="flex items-center justify-center w-[23px] h-[22px] bg-[#e4e4e4]">
            <svg viewBox="0 0 12 12" className="w-3 h-3"><path d="M2 2l8 8M10 2l-8 8" stroke="#9aa7b8" strokeWidth="2.600" /></svg>
          </button>
        </div>
      </nav>

      {/* --- TOOLBARS --- */}
      <div className="relative flex flex-col h-[116px] shrink-0 border-b border-[#d4d4d4] bg-white">
        <div className="flex h-[38px]">
          <Band className="w-[487px] mr-[11px]">
            <Tools items={['newFile', 'openModel', 'save', '|', 'cut', 'copy', 'paste', 'brush', '|', 'print', 'info', '|', 'undo', 'redo', '|', 'torch', 'goto', 'windowTorch', '|', 'del']} />
          </Band>
          <Band className="w-[305px]">
            <Tools items={['zoomIn', 'zoomOut', 'zoomArea', 'hand', 'fit', 'zoomUndo']} />
            <Combo label="缩放" value="100%" className="w-[75px] h-[26px] mr-1" box="border-2 border-[#8b8b8b] bg-white" />
            <Tools gap="gap-2" items={['|', 'sync']} />
          </Band>
          <Band className="w-[363px]">
            <Tools items={['dObject', 'diagram', 'dSequence', 'dUseCase', 'dComponent', 'dDeploy', 'dCollab', 'dStructure', 'dState', 'dActivity', 'dPanel', 'dFlow']} />
          </Band>
        </div>

        <div className="flex w-fit h-[38px] border-t border-[#bdbdbd]">
          <Band className="w-[612px]">
            <Tools items={['make', 'stop', 'play', 'animate', 'generate']} />
            <Combo label="组件" value="DefaultComponent" className="w-[250px] h-[25px] ml-[2px]" box="border border-[#a3a3a3] bg-[#e0e0e0]" />
            <Combo label="配置" value="DefaultConfig" className="w-[200px] h-[25px]" box="border border-[#a3a3a3] bg-[#e0e0e0]" />
          </Band>
          <Band className="w-[479px]">
            <Tools gap="gap-1" items={['back', 'forward']} />
            <Combo label="图" value="Default::Display::structurediagram_0" className="w-[375px] h-[25px] ml-[2px] mr-[2px]" box="border-2 border-[#8b8b8b] bg-white" />
            <Tools items={['binoculars']} />
          </Band>
          <Band className="w-[228px]">
            <ToggleTools items={['vBrowser', 'vList', 'vCode', 'vOutput', '|', 'vFeatures', 'vOverview', 'vDraw']} active={['vBrowser', 'vOutput', 'vDraw']} />
          </Band>
          <Band className="w-[286px]">
            <Tools items={['ball', 'ball', 'bubble', 'ball', '|', 'head', 'people', 'checkDocs', 'pen', 'thumbs']} />
          </Band>
          <Band className="w-[76px]">
            <Tools items={['star', 'starNew']} />
          </Band>
        </div>

        <div className="flex h-[39px] pt-px">
          <Band className="w-[480px]">
            <Tools items={['grid', 'snap', 'ruler', 'pageBreak', '|', 'alTop', 'alMid', 'alBottom', 'alLeft', 'alCenter', 'alRight', '|', 'szWidth', 'szHeight', 'szBoth', '|', 'spH', 'spV']} />
          </Band>
          <Band className="w-[464px]">
            <div className="relative flex items-center w-[121px] h-[27px] shrink-0 bg-white">
              <div className="absolute inset-y-0 left-0 w-[98px] bg-[#f0f0f0]" />
              <svg viewBox="0 0 16 16" className="relative w-4 h-4 ml-[5px]">
                <path d="M1 5V2h8v3M5 2v9M3 11h4" fill="none" stroke="#777" strokeWidth="1.500" />
                <path d="M6 8V5h9v3M10.500 5v10M8.500 15h4" fill="none" stroke="#111" strokeWidth="1.700" />
              </svg>
              <select aria-label="字体" defaultValue="Arial" className={`relative appearance-none flex-1 text-[13px] outline-none ${MONO}`}>
                <option>Arial</option>
              </select>
              <Chevron color="#b5b5b5" />
            </div>
            <Combo label="字号" value="10" className="w-[62px] h-[25px] mr-[2px]" box="border border-[#c0c0c0] bg-[#cccccc] text-[#7d7d7d]" chevron="#a6a6a6" />
            <Tools items={['italic', 'bold', 'txLeft', 'txCenter', 'txRight', 'bullets', 'fontColor', 'lineColor', 'fill']} />
          </Band>
        </div>

        {/* level gauge at the window edge */}
        <div className="absolute right-0 top-5 flex items-end justify-center w-[11px] h-16 p-px rounded-full border-2 border-[#7f7f7f] bg-white">
          <div className="w-1 h-12 rounded-full bg-[#f03a3a]" />
        </div>
      </div>

      {/* --- WORKSPACE --- */}
      <main className="flex flex-1 min-h-0 pb-[3px]">
        <ModelBrowser />
        <DiagramArea />
        <Palette />
      </main>

      <OutputPanel />

      {/* --- STATUS BAR --- */}
      <footer className="relative flex items-center h-[27px] shrink-0 pl-[2px] pr-[10px] pt-[5px] border-t-2 border-[#c4c4c4]">
        <span>如需帮助，请按 F1</span>
        <span className="ml-auto pr-1 border-r border-[#d8d8d8]">去掉标签</span>
        <span className="pl-[6px] pr-3 border-r border-[#d8d8d8]">周一, 18, 10月 2021</span>
        <span className="pl-[6px] whitespace-pre">9:47  PM</span>
        <span className="absolute right-[14px] -top-[8px] text-[20px] leading-6 font-light text-[#8a8a8a] [text-shadow:1px_1px_0_#fff]">CSDN @Tyro_Gzl</span>
      </footer>

      <RenameDialog />
    </div>
  );
};

export default App;
